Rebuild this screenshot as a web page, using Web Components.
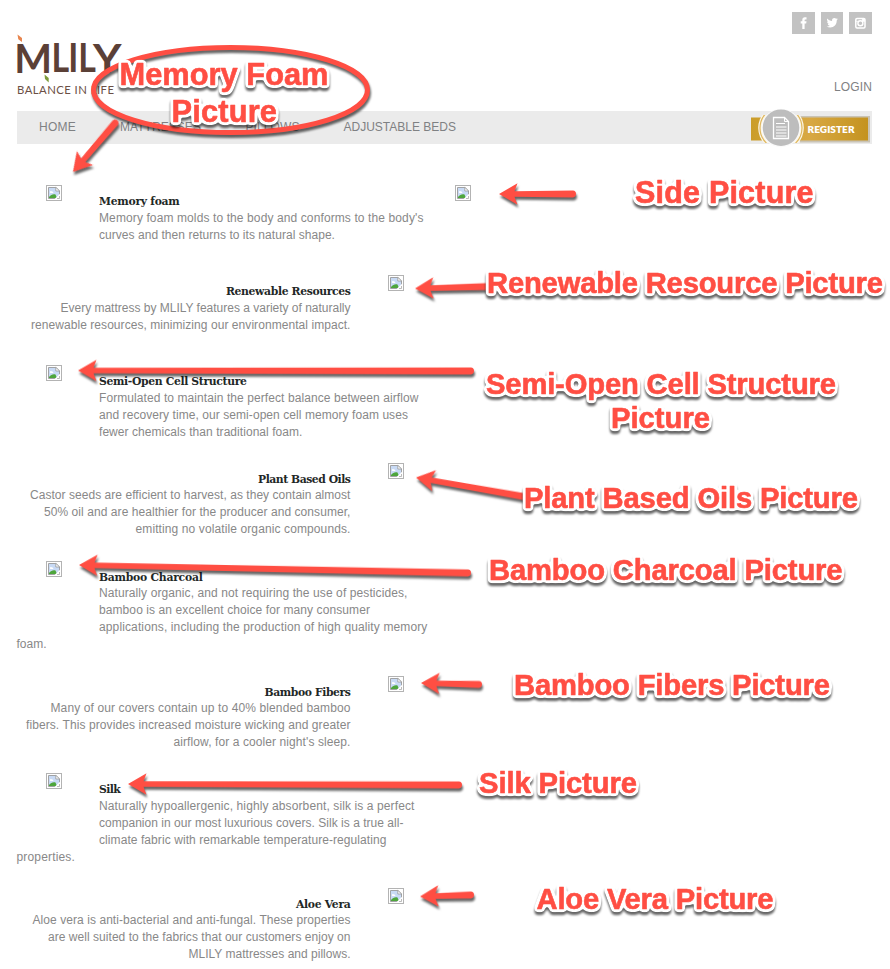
<!DOCTYPE html>
<html lang="en">
<head>
<meta charset="utf-8">
<title>MLILY</title>
<style>
body{margin:0;background:#fff;font-family:"Liberation Sans",Arial,sans-serif;overflow:hidden}
</style>
</head>
<body>
<mlily-page></mlily-page>
<script>
// A single line of text whose tracking is adjusted to fill a given width.
class FitLine extends HTMLElement{
  connectedCallback(){
    if(!this.shadowRoot){
      this.attachShadow({mode:'open'}).innerHTML='<style>:host{display:block;white-space:nowrap}span{display:inline-block}</style><span><slot></slot></span>';
    }
    const s=this.shadowRoot.querySelector('span'),w=+this.getAttribute('w'),n=this.textContent.length;
    const nat=s.getBoundingClientRect().width;
    if(w&&nat){const ls=(w-nat)/n;s.style.letterSpacing=ls+'px';}
  }
}
customElements.define('fit-line',FitLine);

class MissingPicture extends HTMLElement{
  constructor(){
    super();
    this.attachShadow({mode:'open'}).innerHTML=`<style>:host{display:block;width:16px;height:16px}svg{display:block}</style>
    <svg width="16" height="16" viewBox="0 0 16 16">
      <rect x=".5" y=".5" width="15" height="15" fill="#fff" stroke="#b3b3b3"/>
      <path d="M2.5 2.5H10L13.5 6V13.5H2.5Z" fill="#c8daf5" stroke="#9a9a9a" stroke-width=".9"/>
      <path d="M4 7.2c0-1.3 1.600-1.400 2-.6 1-.3 1.600.7 1.200 1.300H4.300Z" fill="#fff"/>
      <path d="M3 13V12C5 9.500 7.500 8.600 9.500 9.500L11 13Z" fill="#4ea63c"/>
      <path d="M8.600 14L14 8.800V14Z" fill="#fff"/>
      <path d="M9.800 2.300V6H13.600Z" fill="#fff" stroke="#999" stroke-width=".8"/>
      <path d="M11 13.500h2.500V11" fill="none" stroke="#aaa" stroke-width=".8"/>
    </svg>`;
  }
}
customElements.define('missing-picture',MissingPicture);

class BrandLogo extends HTMLElement{
  constructor(){
    super();
    this.attachShadow({mode:'open'}).innerHTML=`<style>:host{display:block;width:108px;height:64px}svg{display:block;overflow:visible}</style>
    <svg width="108" height="64" viewBox="17 34 108 64">
      <g font-family="Lato,sans-serif" font-weight="700" font-size="40" fill="#5b4037">
        <text y="72.500" x="14.300">M</text>
        <text y="72.500" x="60.600 80.400 92.100" transform="scale(.85 1)">LIL</text>
        <text y="72.500" x="93" textLength="28.500" lengthAdjust="spacingAndGlyphs">Y</text>
      </g>
      <path d="M17.500 34.500L22 38V42L18.300 39.300Z" fill="#e8854e"/>
      <path d="M44.500 74.500L48.700 78V82.500L45 79Z" fill="#7d9b3a"/>
      <text x="17" y="93.800" font-family="Lato,sans-serif" font-size="11.300" fill="#6b4f45" textLength="97">BALANCE IN LIFE</text>
    </svg>`;
  }
}
customElements.define('brand-logo',BrandLogo);

class SocialLinks extends HTMLElement{
  constructor(){
    super();
    this.attachShadow({mode:'open'}).innerHTML=`<style>:host{display:flex;gap:6px}span{width:22.670px;height:22px;background:#c2c2c2}svg{display:block}</style>
    <span><svg width="22" height="22"><path d="M10.300 17v-5.500H8.700V9.300h1.600V8c0-1.900 1-2.700 2.500-2.700h1.700v2.200h-1c-.7 0-.9.300-.9.900v.9h1.900l-.3 2.200h-1.600V17Z" fill="#fff"/></svg></span>
    <span><svg width="22" height="22"><path d="M6.200 6.600c1.300 1.500 2.900 2.300 4.900 2.400-.4-1.800.8-3 2.300-3 .7 0 1.300.3 1.700.7l1.500-.5-.9 1.300 1.200-.3-1.200 1.300c.2 4-2.800 6.900-6.300 6.900-1.500 0-2.700-.4-3.800-1 1.300.1 2.500-.2 3.300-.9-1.100 0-1.800-.7-2.100-1.600h1c-1.100-.4-1.700-1.200-1.700-2.300l1 .2c-1-.8-1.400-2-.9-3.200Z" fill="#fff"/></svg></span>
    <span><svg width="22" height="22"><rect x="6.800" y="6.500" width="9.200" height="9.400" rx="1.200" fill="none" stroke="#fff" stroke-width="1.500"/><circle cx="11.400" cy="11.300" r="2.500" fill="none" stroke="#fff" stroke-width="1.400"/><path d="M7 9.300H9.500M13.500 9.300H16M13.400 7h2v2h-2Z" stroke="#fff" fill="#fff" stroke-width=".8"/></svg></span>`;
  }
}
customElements.define('social-links',SocialLinks);

class RegisterButton extends HTMLElement{
  constructor(){
    super();
    this.attachShadow({mode:'open'}).innerHTML=`<style>:host{display:block;width:121px;height:40px}svg{display:block;overflow:visible}</style>
    <svg width="121" height="40" viewBox="751 108 121 40">
      <defs><linearGradient id="g"><stop offset="0" stop-color="#cb9d29"/><stop offset=".5" stop-color="#d8a843"/><stop offset="1" stop-color="#c49320"/></linearGradient>
      <clipPath id="c"><rect x="751" y="115" width="119" height="28"/></clipPath></defs>
      <rect x="800" y="116" width="70" height="26.500" fill="#c9c3b5"/>
      <rect x="751" y="117.500" width="117" height="23" fill="url(#g)"/>
      <g clip-path="url(#c)">
      <circle cx="781" cy="128" r="22.800" fill="#fbf6e8"/>
      <circle cx="781" cy="128" r="21" fill="none" stroke="#dfb75e" stroke-width="1.200"/>
      </g>
      <circle cx="781" cy="128" r="19.300" fill="#fafafa"/>
      <circle cx="781" cy="127.700" r="18.300" fill="#bdbdbd"/>
      <path d="M773.500 117.500H784.500L788.500 121.500V138.500H773.500Z" fill="none" stroke="#fff" stroke-width="1.300"/>
      <path d="M784.500 117.500V121.500H788.500M776 123.500H785M776 127H786.500M776 130H786.500M776 133H786.500M776 136H786.500" stroke="#fff" fill="none" stroke-width="1"/>
      <text x="807.500" y="132.600" font-family="Lato,sans-serif" font-weight="800" font-size="10" fill="#fff" textLength="47">REGISTER</text>
    </svg>`;
  }
}
customElements.define('register-button',RegisterButton);

class SiteHeader extends HTMLElement{
  constructor(){
    super();
    this.attachShadow({mode:'open'}).innerHTML=`<style>
      :host{display:block;height:144px;color:#7f8183;font-size:12px}
      .top{display:flex;justify-content:space-between;height:111px;padding:0 18px 0 17px;box-sizing:border-box}
      brand-logo{margin-top:34px}
      .right{display:flex;flex-direction:column;justify-content:space-between;align-items:flex-end;padding:12px 0 15px}
      .right fit-line{line-height:17px;margin-right:0}
      nav{display:flex;align-items:center;height:33px;background:#ebebeb;margin:0 18px 0 17px;padding-left:22px}
      nav fit-line{width:var(--w);margin-right:var(--m);flex:none;line-height:17px;padding-bottom:1px}
      register-button{margin:1px 0 0 auto}
    </style>
    <div class="top"><brand-logo></brand-logo><div class="right"><social-links></social-links><fit-line w="38">LOGIN</fit-line></div></div>
    <nav><fit-line w="37" style="--w:37px;--m:44px">HOME</fit-line><fit-line w="81" style="--w:81px;--m:44.5px">MATTRESSES</fit-line><fit-line w="54" style="--w:54px;--m:44px">PILLOWS</fit-line><fit-line w="112.5" style="--w:113px;--m:0px">ADJUSTABLE BEDS</fit-line><register-button></register-button></nav>`;
  }
}
customElements.define('site-header',SiteHeader);

class FeatureRow extends HTMLElement{
  connectedCallback(){
    if(this.shadowRoot)return;
    const d=this.data;
    this.attachShadow({mode:'open'}).innerHTML=`<style>
      :host{display:flex;height:${d.h}px;box-sizing:border-box;color:#888;font-size:12px;line-height:17px}
      :host([side=left]){padding-left:46px}
      :host([side=right]){flex-direction:row-reverse;justify-content:flex-end;padding-left:17px}
      :host([side=left]) .copy{margin-left:37px;width:356px}
      :host([side=right]) .copy{width:333.500px;margin-right:37.500px;text-align:right}
      .copy{padding-top:9px}
      h3{margin:0;height:${d.low?16:15}px;font:700 10.800px/16px "DejaVu Serif",serif;color:#1f2827}
      .out{margin-left:-82.500px}
      p{margin:0}
    </style>
    <missing-picture></missing-picture>
    <div class="copy"><h3><fit-line w="${d.hw}">${d.title}</fit-line></h3>
    <p>${d.lines.map(([t,w],i)=>`<fit-line w="${w}"${i===3?' class="out"':''}>${t}</fit-line>`).join('')}</p></div>
    ${d.extra?'<missing-picture></missing-picture>':''}`;
  }
}
customElements.define('feature-row',FeatureRow);

// Arrows and captions drawn over the page.
class NoteLayer extends HTMLElement{
  constructor(){
    super();
    const arrows=[[73,172,116,122],[499,194,574,194],[415,288.500,490,286.500],[78,370.500,472,371],[416,477.500,526,497],[79,565,469,573],[421,683,480,684.500],[128,784,460,785],[420,896.500,472,895]];
    const arrow=([x1,y1,x2,y2])=>{
      const l=Math.hypot(x2-x1,y2-y1),a=Math.atan2(y2-y1,x2-x1)*180/Math.PI;
      return `<path transform="translate(${x1} ${y1}) rotate(${a})" d="M0 0L18.500 -10.800L15.500 -2.800L${l-1} -3.400Q${l+2} -3 ${l+2} 0Q${l+2} 3 ${l-1} 3.400L15.500 2.800L18.500 10.800Z"/>`;
    };
    const notes=[['Memory Foam',119.500,85,209,30.800],['Picture',171.500,122,105.500,30.800],['Side Picture',635,203,178.500,30.500],['Renewable Resource Picture',487,293,396,29.200],['Semi-Open Cell Structure',486,394,350,29.200],['Picture',611,428,99,29.200],['Plant Based Oils Picture',524,508,334,29.200],['Bamboo Charcoal Picture',489,580,353.500,29.200],['Bamboo Fibers Picture',514,695,316,29.200],['Silk Picture',479,793,158,29.200],['Aloe Vera Picture',536.500,909,237,29.200]];
    this.attachShadow({mode:'open'}).innerHTML=`<style>
      :host{position:absolute;left:0;top:0;display:block;pointer-events:none}
      svg{display:block}
      .m{fill:#ff4e43;filter:drop-shadow(1px 3px 1px rgba(0,0,0,.6))}
      text{font-family:"Liberation Sans",Arial,sans-serif;font-weight:700;fill:#ff4e43;stroke:#ff4e43;stroke-width:.6px;stroke-linejoin:round;filter:url(#halo)}
    </style>
    <svg width="890" height="969" viewBox="0 0 890 969">
      <defs><filter id="halo" x="-5%" y="-30%" width="110%" height="170%" color-interpolation-filters="sRGB">
        <feMorphology in="SourceAlpha" operator="dilate" radius="1"/>
        <feGaussianBlur stdDeviation="1.800"/>
        <feComponentTransfer result="a"><feFuncA type="linear" slope="9" intercept="-.5"/></feComponentTransfer>
        <feFlood flood-color="#fff"/><feComposite in2="a" operator="in" result="white"/>
        <feGaussianBlur in="a" stdDeviation=".8"/><feOffset dy="2.500" result="s"/>
        <feFlood flood-color="#000" flood-opacity=".6"/><feComposite in2="s" operator="in" result="shade"/>
        <feMerge><feMergeNode in="shade"/><feMergeNode in="white"/><feMergeNode in="SourceGraphic"/></feMerge>
      </filter></defs>
      <g class="m"><ellipse cx="230.500" cy="90" rx="137" ry="42.500" fill="none" stroke="#ff4e43" stroke-width="5"/>${arrows.map(arrow).join('')}</g>
      ${notes.map(([t,x,y,w,s])=>`<text x="${x}" y="${y}" textLength="${w}" font-size="${s}">${t}</text>`).join('')}
    </svg>`;
  }
}
customElements.define('note-layer',NoteLayer);

const features=[
 {side:'left',h:90,low:true,title:'Memory foam',hw:80.500,extra:true,lines:[["Memory foam molds to the body and conforms to the body's",324.500],["curves and then returns to its natural shape.",236]]},
 {side:'right',h:90,low:true,title:'Renewable Resources',hw:124.500,lines:[["Every mattress by MLILY features a variety of naturally",290],["renewable resources, minimizing our environmental impact.",319.500]]},
 {side:'left',h:98,low:true,title:'Semi-Open Cell Structure',hw:147.500,lines:[["Formulated to maintain the perfect balance between airflow",319.500],["and recovery time, our semi-open cell memory foam uses",309],["fewer chemicals than traditional foam.",203.500]]},
 {side:'right',h:98,title:'Plant Based Oils',hw:92.500,lines:[["Castor seeds are efficient to harvest, as they contain almost",320.500],["50% oil and are healthier for the producer and consumer,",306.500],["emitting no volatile organic compounds.",215]]},
 {side:'left',h:115,title:'Bamboo Charcoal',hw:103.500,lines:[["Naturally organic, and not requiring the use of pesticides,",308.500],["bamboo is an excellent choice for many consumer",271],["applications, including the production of high quality memory",328.500],["foam.",30]]},
 {side:'right',h:97,title:'Bamboo Fibers',hw:86,lines:[["Many of our covers contain up to 40% blended bamboo",300],["fibers. This provides increased moisture wicking and greater",324.500],["airflow, for a cooler night's sleep.",177]]},
 {side:'left',h:115,low:true,title:'Silk',hw:21,lines:[["Naturally hypoallergenic, highly absorbent, silk is a perfect",315.500],["companion in our most luxurious covers. Silk is a true all-",304.500],["climate fabric with remarkable temperature-regulating",287.500],["properties.",58.500]]},
 {side:'right',h:81,title:'Aloe Vera',hw:54.500,lines:[["Aloe vera is anti-bacterial and anti-fungal. These properties",318],["are well suited to the fabrics that our customers enjoy on",302.500],["MLILY mattresses and pillows.",162]]}
];

class MlilyPage extends HTMLElement{
  connectedCallback(){
    this.attachShadow({mode:'open'}).innerHTML=`<style>:host{display:block;position:relative;width:890px;height:969px;overflow:hidden}main{padding-top:41px}</style><site-header></site-header><main></main><note-layer></note-layer>`;
    const main=this.shadowRoot.querySelector('main');
    for(const f of features){const r=document.createElement('feature-row');r.data=f;r.setAttribute('side',f.side);main.append(r);}
  }
}
customElements.define('mlily-page',MlilyPage);
</script>
</body>
</html>
